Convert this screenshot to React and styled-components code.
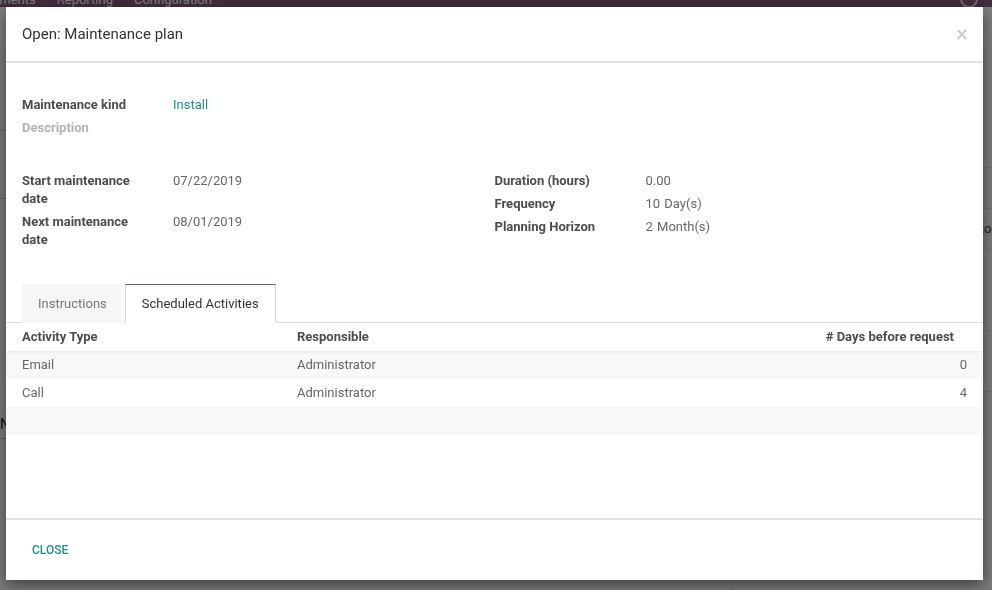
import React from "react";
import styled, { createGlobalStyle } from "styled-components";

const GlobalStyle = createGlobalStyle`
  html, body {
    margin: 0;
    padding: 0;
    height: 100%;
    overflow: hidden;
  }
  body {
    font-family: Roboto, "Noto Sans", "Liberation Sans", sans-serif;
    font-size: 13px;
    color: #4c4c4c;
    background: #f9f9f9;
  }
`;

/* ---------- page behind the dialog ---------- */

const Page = styled.div`
  width: 992px;
  height: 590px;
  display: flex;
  flex-direction: column;
  background: #f9f9f9;
  overflow: hidden;
`;

const NavBar = styled.nav`
  height: 7px;
  flex: none;
  display: flex;
  align-items: flex-start;
  gap: 21px;
  padding-right: 14px;
  background: #875a7b;
  overflow: hidden;
`;

const NavItem = styled.span`
  color: #fff;
  font-size: 13px;
  line-height: 0;
  white-space: nowrap;
  &:first-child {
    margin-left: -33px;
  }
`;

const NavUser = styled.span`
  margin-left: auto;
  width: 14px;
  height: 14px;
  margin-top: -10px;
  border: 2px solid #ddd;
  border-radius: 50%;
`;

const PageMain = styled.div`
  flex: 1;
  display: flex;
  border-top: 40px solid #fff;
`;

const FormArea = styled.div`
  flex: 1;
  display: flex;
  flex-direction: column;
  padding-top: 40px;
`;

const FormLine = styled.div`
  height: ${(p) => p.h}px;
  border-bottom: 1px solid #ccc;
  color: #222;
  font-size: 14px;
  display: flex;
  align-items: flex-end;
  padding-bottom: 6px;
  box-sizing: border-box;
`;

const Chatter = styled.aside`
  width: 260px;
  flex: none;
  border-left: 1px solid #ddd;
  display: flex;
  flex-direction: column;
  padding-top: 60px;
`;

const Msg = styled.div`
  padding: 10px 0 10px 60px;
  border-bottom: 1px solid #e5e5e5;
  line-height: 20px;
  white-space: nowrap;
  b {
    display: block;
    color: #222;
  }
`;

const Backdrop = styled.div`
  position: fixed;
  inset: 0;
  background: rgba(0, 0, 0, 0.5);
`;

/* ---------- dialog ---------- */

const Modal = styled.div`
  position: fixed;
  left: 6px;
  top: 7px;
  width: 977px;
  height: 573px;
  background: #fff;
  display: flex;
  flex-direction: column;
  box-shadow: 0 5px 15px rgba(0, 0, 0, 0.5);
`;

const Header = styled.header`
  height: 54px;
  flex: none;
  display: flex;
  align-items: center;
  padding: 0 14px 0 16px;
  border-bottom: 2px solid #e2e2e2;
`;

const Title = styled.h4`
  margin: 0;
  font-size: 15px;
  font-weight: 400;
  color: #333;
`;

const CloseX = styled.button`
  margin-left: auto;
  border: none;
  background: none;
  padding: 0;
  font-family: "DejaVu Sans", sans-serif;
  font-size: 17px;
  font-weight: 700;
  line-height: 1;
  color: #cacaca;
  cursor: pointer;
`;

const Body = styled.div`
  flex: 1;
  padding-top: 33px;
  display: flex;
  flex-direction: column;
`;

const Group = styled.div`
  display: grid;
  grid-template-columns: 1fr 1fr;
  padding: 0 16px;
  margin-top: ${(p) => p.mt || 0}px;
`;

const Column = styled.div`
  display: flex;
  flex-direction: column;
  gap: 5px;
`;

const Field = styled.div`
  display: grid;
  grid-template-columns: 151px 1fr;
  line-height: 18px;
`;

const Label = styled.div`
  font-weight: 700;
  padding-right: 34px;
  color: ${(p) => (p.empty ? "#b3b3b3" : "#4c4c4c")};
`;

const Value = styled.div`
  color: ${(p) => (p.link ? "#1f8f8a" : "#666")};
  word-spacing: 1px;
`;

const Notebook = styled.div`
  margin-top: 35px;
`;

const TabList = styled.div`
  display: flex;
  padding-left: 16px;
  border-bottom: 1px solid #dcdcdc;
`;

const Tab = styled.div`
  height: 39px;
  box-sizing: border-box;
  margin-bottom: -1px;
  display: flex;
  align-items: center;
  padding: 0 16px 0 15px;
  border: 1px solid transparent;
  color: ${(p) => (p.active ? "#333" : "#777")};
  background: ${(p) => (p.active ? "#fff" : "#f6f6f6")};
  ${(p) =>
    p.active &&
    `
    border-color: #7c5a77 #d2d2d2 #fff #d2d2d2;
    margin-left: 1px;
    padding: 0 16px;
  `}
`;

const Row = styled.div`
  display: grid;
  grid-template-columns: 275px 1fr 300px;
  line-height: 18px;
  min-height: 28px;
  box-sizing: border-box;
  background: ${(p) => (p.striped ? "#f8f8f8" : "#fff")};
`;

const HeadRow = styled(Row)`
  position: relative;
  box-shadow: 0 3px 3px -2px rgba(0, 0, 0, 0.08);
`;

const HeadCell = styled.div`
  padding: 5px 16px;
  font-weight: 700;
  color: #4c4c4c;
  text-align: ${(p) => (p.right ? "right" : "left")};
  padding-right: ${(p) => (p.right ? 29 : 16)}px;
`;

const Cell = styled.div`
  padding: 5px 16px;
  color: #666;
  text-align: ${(p) => (p.right ? "right" : "left")};
`;

const Footer = styled.footer`
  height: 60px;
  flex: none;
  display: flex;
  align-items: center;
  padding: 0 16px;
  border-top: 2px solid #e2e2e2;
`;

const FooterButton = styled.button`
  border: none;
  background: none;
  padding: 0 10px;
  font-family: Roboto, sans-serif;
  font-size: 12px;
  font-weight: 500;
  text-transform: uppercase;
  color: #1f8f8a;
  cursor: pointer;
`;

const activities = [
  { type: "Email", who: "Administrator", days: 0 },
  { type: "Call", who: "Administrator", days: 4 },
];

export default function App() {
  return (
    <>
      <GlobalStyle />
      <Page>
        <NavBar>
          <NavItem>Equipments</NavItem>
          <NavItem>Reporting</NavItem>
          <NavItem>Configuration</NavItem>
          <NavUser />
        </NavBar>
        <PageMain>
          <FormArea>
            <FormLine h={44} />
            <FormLine h={68} />
            <FormLine h={240}>Name</FormLine>
          </FormArea>
          <Chatter>
            <Msg>
              <b>Next activities on the equipment</b>
              Description of the request
            </Msg>
            <Msg>
              <b>Last update on the request</b>
            </Msg>
            <Msg>Maintenance request scheduled today</Msg>
            <Msg>
              <b>Administrator - last week</b>
              Information about the request
              <br />
              Equipment built and shipped
            </Msg>
            <Msg>
              <b>Administrator - last month</b>
              Equipment created
            </Msg>
          </Chatter>
        </PageMain>
        <Backdrop />
        <Modal>
          <Header>
            <Title>Open: Maintenance plan</Title>
            <CloseX aria-label="Close">×</CloseX>
          </Header>
          <Body>
            <Group>
              <Column>
                <Field>
                  <Label>Maintenance kind</Label>
                  <Value link>Install</Value>
                </Field>
                <Field>
                  <Label empty>Description</Label>
                  <Value />
                </Field>
              </Column>
            </Group>
            <Group mt={35}>
              <Column>
                <Field>
                  <Label>Start maintenance date</Label>
                  <Value>07/22/2019</Value>
                </Field>
                <Field>
                  <Label>Next maintenance date</Label>
                  <Value>08/01/2019</Value>
                </Field>
              </Column>
              <Column>
                <Field>
                  <Label>Duration (hours)</Label>
                  <Value>0.00</Value>
                </Field>
                <Field>
                  <Label>Frequency</Label>
                  <Value>10 Day(s)</Value>
                </Field>
                <Field>
                  <Label>Planning Horizon</Label>
                  <Value>2 Month(s)</Value>
                </Field>
              </Column>
            </Group>
            <Notebook>
              <TabList>
                <Tab>Instructions</Tab>
                <Tab active>Scheduled Activities</Tab>
              </TabList>
              <HeadRow>
                <HeadCell>Activity Type</HeadCell>
                <HeadCell>Responsible</HeadCell>
                <HeadCell right># Days before request</HeadCell>
              </HeadRow>
              {activities.map((a, i) => (
                <Row key={a.type} striped={i % 2 === 0}>
                  <Cell>{a.type}</Cell>
                  <Cell>{a.who}</Cell>
                  <Cell right>{a.days}</Cell>
                </Row>
              ))}
              <Row striped />
            </Notebook>
          </Body>
          <Footer>
            <FooterButton>Close</FooterButton>
          </Footer>
        </Modal>
      </Page>
    </>
  );
}
